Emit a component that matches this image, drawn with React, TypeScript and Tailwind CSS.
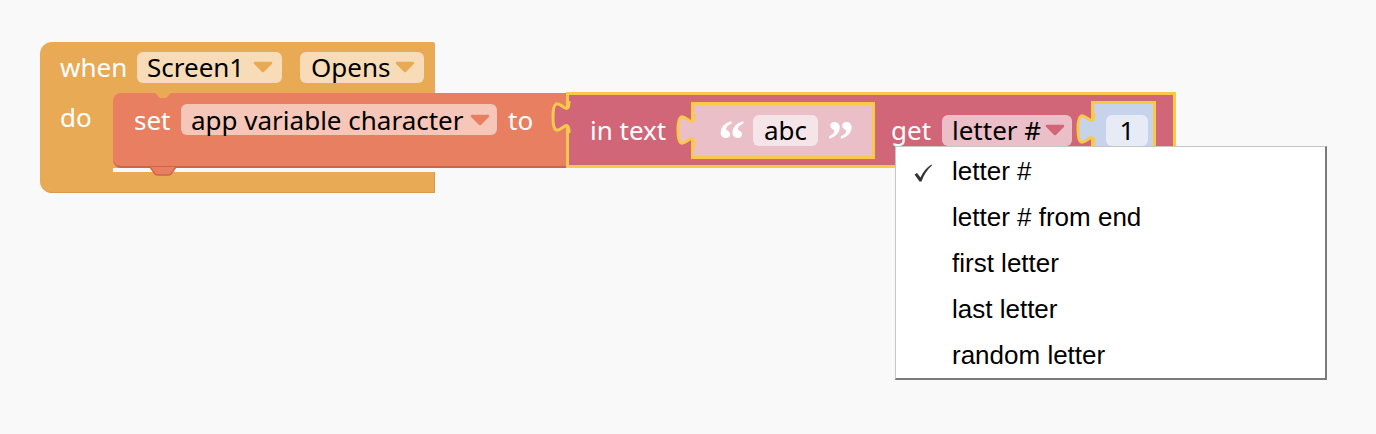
import React from "react";

// down-pointing dropdown triangle inside a field
function Arrow({ color }: { color: string }) {
  return (
    <svg width="22" height="12" viewBox="0 0 22 12" aria-hidden="true">
      <path d="M3 2 L19 2 L11 10 Z" fill={color} stroke={color} strokeWidth="2.5" strokeLinejoin="round" />
    </svg>
  );
}

// blockly style output tab sticking out on the left of a value block
function Tab({ fill, top }: { fill: string; top: string }) {
  return (
    <svg
      width="24"
      height="32"
      viewBox="0 0 24 32"
      className={`absolute -left-[19px] ${top}`}
      aria-hidden="true"
    >
      <path d="M24 1 L19 1 C19 21, 3 -15, 3 16 C3 47, 19 11, 19 31 L24 31 Z" fill={fill} />
      <path d="M19 0 L19 1 C19 21, 3 -15, 3 16 C3 47, 19 11, 19 31 L19 32" fill="none" stroke="#f8c94b" strokeWidth="3" />
    </svg>
  );
}

export default function App() {
  return (
    <div className="relative w-[1376px] h-[434px] bg-[#f9f9f9] overflow-hidden font-['Noto_Sans',sans-serif]">
      {/* event block */}
      <div className="absolute left-[40px] top-[42px] flex flex-col">
        <div className="w-[395px] h-[50px] bg-[#e9aa56] rounded-tl-[12px] rounded-tr-[2px] flex items-center pl-[20px] text-[26px] text-white leading-none">
          <span className="w-[77px]">when</span>
          <div className="w-[145px] h-[31px] pl-[10px] pr-[8px] rounded-[6px] bg-[#f8dcb8] flex items-center justify-between text-black">
            <span>Screen1</span>
            <Arrow color="#e9aa56" />
          </div>
          <div className="ml-[18px] w-[124px] h-[31px] pl-[11px] pr-[8px] rounded-[6px] bg-[#f8dcb8] flex items-center justify-between text-black">
            <span>Opens</span>
            <Arrow color="#e9aa56" />
          </div>
        </div>

        <div className="flex h-[80px]">
          <div className="w-[73px] h-[80px] bg-[#e9aa56] pl-[20px] pt-[12px] text-[26px] text-white leading-none">do</div>
          <div className="w-[322px] h-[76px] bg-[#e9aa56]">
            {/* set statement */}
            <div className="relative mt-[1px] flex w-max">
              <div className="relative w-[455px] h-[75px] bg-[#e97f61] rounded-l-[8px] border-b-2 border-[#c9674c] flex items-start pl-[21px] pt-[11px] text-[26px] leading-none">
                <svg width="26" height="7" viewBox="0 0 26 7" className="absolute left-[37px] top-0" aria-hidden="true">
                  <path d="M0 0 L5 0 L10 5 L16 5 L21 0 L26 0 Z" fill="#e9aa56" />
                </svg>
                <svg width="26" height="9" viewBox="0 0 26 9" className="absolute left-[37px] -bottom-[10px]" aria-hidden="true">
                  <path d="M0 0 L5 7 Q6 8 8 8 L18 8 Q20 8 21 7 L26 0 Z" fill="#e97f61" />
                  <path d="M0 0 L5 7 Q6 8 8 8 L18 8 Q20 8 21 7 L26 0" fill="none" stroke="#c9674c" strokeWidth="1.5" />
                </svg>
                <div className="w-[47px] h-[31px] flex items-center text-white">set</div>
                <div className="h-[31px] w-[316px] pl-[10px] pr-[6px] rounded-[6px] bg-[#f6c7b9] flex items-center justify-between text-black">
                  <span>app variable character</span>
                  <Arrow color="#e97f61" />
                </div>
                <div className="ml-[11px] h-[31px] flex items-center text-white">to</div>
              </div>

              {/* text block (selected) */}
              <div className="relative -ml-[2px] -mt-[1px] w-[610px] h-[76px] bg-[#d06677] border-[3px] border-[#f8c94b] flex items-center pl-[21px] text-[26px] leading-none">
                <Tab fill="#d06677" top="top-[6px]" />
                <span className="w-[101px] text-white">in text</span>

                <div className="relative w-[184px] h-[57px] bg-[#eabfc8] border-[3px] border-[#f8c94b] flex items-center pl-[24px]">
                  <Tab fill="#eabfc8" top="top-[9px]" />
                  <span className="w-[35px] text-white text-[54px] font-bold leading-none mt-[20px] font-['Liberation_Serif',serif]">“</span>
                  <div className="w-[65px] h-[31px] rounded-[6px] bg-[#f5e5e9] flex items-center justify-center text-black">abc</div>
                  <span className="ml-[9px] text-white text-[54px] font-bold leading-none mt-[20px] font-['Liberation_Serif',serif]">”</span>
                </div>

                <span className="w-[67px] pl-[16px] text-white">get</span>
                <div className="h-[31px] w-[130px] pl-[10px] pr-[6px] rounded-[6px] bg-[#eabfc8] flex items-center justify-between text-black">
                  <span>letter #</span>
                  <Arrow color="#d06677" />
                </div>

                <div className="relative ml-[19px] w-[65px] h-[58px] bg-[#c6d3ea] border-[3px] border-[#f8c94b] flex items-center pl-[12px]">
                  <Tab fill="#c6d3ea" top="top-[9px]" />
                  <div className="h-[31px] w-[42px] rounded-[6px] bg-[#e6ebf6] flex items-center justify-center text-black">1</div>
                </div>
              </div>
            </div>
          </div>
        </div>

        <div className="w-[395px] h-[21px] bg-[#e9aa56] rounded-bl-[12px] border-b border-r border-[#d69a4a]" />
      </div>

      {/* dropdown menu */}
      <div className="absolute left-[895px] top-[146px] w-[432px] h-[234px] bg-white border-l border-t border-[#c6c6c6] border-r-2 border-b-2 border-r-[#7a7a7a] border-b-[#7a7a7a] pt-[1px] font-['Liberation_Sans',Arial,sans-serif] text-[26px] text-black leading-none">
        {["letter #", "letter # from end", "first letter", "last letter", "random letter"].map((item, i) => (
          <div key={item} className="relative h-[46px] flex items-center pl-[56px]">
            {i === 0 && (
              <svg width="20" height="18" viewBox="0 0 20 18" className="absolute left-[17px] top-[16px]" aria-hidden="true">
                <path d="M1.5 10.5 L4 9 L7.5 13.5 C10 8 13.5 3.5 18.5 0.5 L19 1.5 C14.5 5 11 10.5 8.5 17.5 L6.5 17.5 Z" fill="#333" />
              </svg>
            )}
            {item}
          </div>
        ))}
      </div>
    </div>
  );
}
